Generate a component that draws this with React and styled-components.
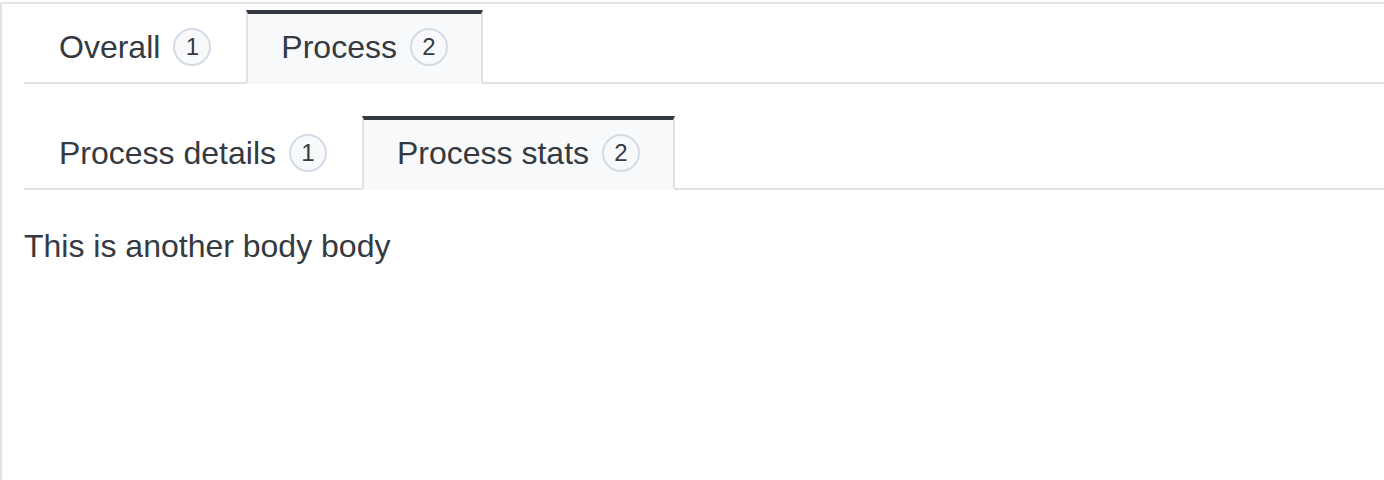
import React, { useState } from "react";
import styled, { createGlobalStyle } from "styled-components";

const GlobalStyle = createGlobalStyle`
  html, body { margin: 0; padding: 0; background: #ffffff; }
  body {
    font-family: "Liberation Sans", Arial, Helvetica, sans-serif;
    color: #343a40;
  }
  * { box-sizing: border-box; }
`;

const Frame = styled.div`
  margin-top: 2px;
  border-top: 2px solid #e2e3e5;
  border-left: 2px solid #e2e3e5;
  padding: 6px 0 0 22px;
  min-height: 478px;
`;

const TabList = styled.ul`
  display: flex;
  margin: 0;
  padding: 0;
  list-style: none;
  border-bottom: 2px solid #dee2e6;
`;

const Tab = styled.li`
  display: flex;
  align-items: center;
  gap: 13px;
  padding: 9px 33px 11px 33px;
  margin-bottom: -2px;
  border: 2px solid transparent;
  border-top-width: 4px;
  font-size: 32px;
  line-height: 48px;
  color: #343a40;
  cursor: pointer;
  background: ${(p) => (p.$active ? "#f8f9fb" : "transparent")};
  border-color: ${(p) => (p.$active ? "#dee2e6" : "transparent")};
  border-top-color: ${(p) => (p.$active ? "#343a40" : "transparent")};
  border-bottom-color: ${(p) => (p.$active ? "#f8f9fb" : "transparent")};
`;

const Badge = styled.span`
  display: inline-flex;
  align-items: center;
  justify-content: center;
  width: 38px;
  height: 38px;
  border-radius: 50%;
  border: 2px solid #d3dbe6;
  background: #f8f9fb;
  font-size: 24px;
  line-height: 1;
  color: #343a40;
`;

const Pane = styled.div`
  padding-top: ${(p) => p.$top}px;
`;

const BodyText = styled.p`
  margin: 0;
  font-size: 32px;
  line-height: 48px;
  color: #343a40;
`;

function Tabs({ items, active, onSelect }) {
  return (
    <TabList>
      {items.map((it, i) => (
        <Tab key={it.label} $active={i === active} onClick={() => onSelect(i)}>
          {it.label}
          <Badge>{it.count}</Badge>
        </Tab>
      ))}
    </TabList>
  );
}

export default function App() {
  const [outer, setOuter] = useState(1);
  const [inner, setInner] = useState(1);
  return (
    <>
      <GlobalStyle />
      <Frame>
        <Tabs
          items={[
            { label: "Overall", count: 1 },
            { label: "Process", count: 2 },
          ]}
          active={outer}
          onSelect={setOuter}
        />
        <Pane $top={32}>
          {outer === 1 ? (
            <>
              <Tabs
                items={[
                  { label: "Process details", count: 1 },
                  { label: "Process stats", count: 2 },
                ]}
                active={inner}
                onSelect={setInner}
              />
              <Pane $top={32}>
                <BodyText>
                  {inner === 1 ? "This is another body body" : "This is the body"}
                </BodyText>
              </Pane>
            </>
          ) : (
            <BodyText>Overall body</BodyText>
          )}
        </Pane>
      </Frame>
    </>
  );
}
